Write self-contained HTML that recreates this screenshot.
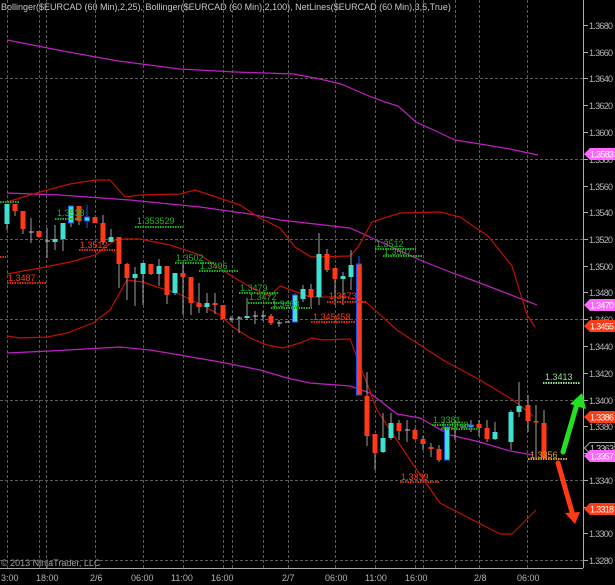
<!DOCTYPE html>
<html><head><meta charset="utf-8"><style>
html,body{margin:0;padding:0;background:#000;width:615px;height:585px;overflow:hidden}
svg{display:block}
text{font-family:"Liberation Sans",sans-serif}
</style></head><body>
<svg width="615" height="585" viewBox="0 0 615 585" xmlns="http://www.w3.org/2000/svg">
<rect width="615" height="585" fill="#000"/>
<g stroke="#5a5a5a" stroke-width="1" stroke-dasharray="3,2">
<line x1="7.5" y1="0" x2="7.5" y2="568"/><line x1="39.5" y1="0" x2="39.5" y2="568"/><line x1="46.5" y1="0" x2="46.5" y2="568"/>
<line x1="95.5" y1="0" x2="95.5" y2="568"/><line x1="143.5" y1="0" x2="143.5" y2="568"/><line x1="183.5" y1="0" x2="183.5" y2="568"/>
<line x1="223.5" y1="0" x2="223.5" y2="568"/><line x1="232.5" y1="0" x2="232.5" y2="568"/><line x1="263.5" y1="0" x2="263.5" y2="568"/>
<line x1="288.5" y1="0" x2="288.5" y2="568"/><line x1="335.5" y1="0" x2="335.5" y2="568"/><line x1="375.5" y1="0" x2="375.5" y2="568"/>
<line x1="415.5" y1="0" x2="415.5" y2="568"/><line x1="423.5" y1="0" x2="423.5" y2="568"/><line x1="455.5" y1="0" x2="455.5" y2="568"/>
<line x1="479.5" y1="0" x2="479.5" y2="568"/><line x1="527.5" y1="0" x2="527.5" y2="568"/>
<line x1="0" y1="78.5" x2="583" y2="78.5"/><line x1="0" y1="159.5" x2="583" y2="159.5"/><line x1="0" y1="239.5" x2="583" y2="239.5"/>
<line x1="0" y1="319.5" x2="583" y2="319.5"/><line x1="0" y1="400.5" x2="583" y2="400.5"/><line x1="0" y1="480.5" x2="583" y2="480.5"/>
<line x1="0" y1="560.5" x2="583" y2="560.5"/>
</g>
<line x1="583.5" y1="0" x2="583.5" y2="568" stroke="#aaa"/>
<line x1="0" y1="568.5" x2="583" y2="568.5" stroke="#aaa"/>
<g stroke="#aaa">
<line x1="583" y1="25.5" x2="588" y2="25.5"/><line x1="583" y1="52.5" x2="588" y2="52.5"/><line x1="583" y1="78.5" x2="588" y2="78.5"/>
<line x1="583" y1="105.5" x2="588" y2="105.5"/><line x1="583" y1="132.5" x2="588" y2="132.5"/><line x1="583" y1="159.5" x2="588" y2="159.5"/>
<line x1="583" y1="186.5" x2="588" y2="186.5"/><line x1="583" y1="212.5" x2="588" y2="212.5"/><line x1="583" y1="239.5" x2="588" y2="239.5"/>
<line x1="583" y1="266.5" x2="588" y2="266.5"/><line x1="583" y1="292.5" x2="588" y2="292.5"/><line x1="583" y1="319.5" x2="588" y2="319.5"/>
<line x1="583" y1="346.5" x2="588" y2="346.5"/><line x1="583" y1="373.5" x2="588" y2="373.5"/><line x1="583" y1="400.5" x2="588" y2="400.5"/>
<line x1="583" y1="426.5" x2="588" y2="426.5"/><line x1="583" y1="453.5" x2="588" y2="453.5"/><line x1="583" y1="480.5" x2="588" y2="480.5"/>
<line x1="583" y1="507.5" x2="588" y2="507.5"/><line x1="583" y1="533.5" x2="588" y2="533.5"/><line x1="583" y1="560.5" x2="588" y2="560.5"/>
</g>
<g fill="#b4b4b4" font-size="9">
<text x="589" y="29" textLength="24">1.3680</text><text x="589" y="56" textLength="24">1.3660</text><text x="589" y="82" textLength="24">1.3640</text>
<text x="589" y="109" textLength="24">1.3620</text><text x="589" y="136" textLength="24">1.3600</text><text x="589" y="163" textLength="24">1.3580</text>
<text x="589" y="190" textLength="24">1.3560</text><text x="589" y="216" textLength="24">1.3540</text><text x="589" y="243" textLength="24">1.3520</text>
<text x="589" y="270" textLength="24">1.3500</text><text x="589" y="296" textLength="24">1.3480</text><text x="589" y="323" textLength="24">1.3460</text>
<text x="589" y="350" textLength="24">1.3440</text><text x="589" y="377" textLength="24">1.3420</text><text x="589" y="404" textLength="24">1.3400</text>
<text x="589" y="430" textLength="24">1.3380</text><text x="589" y="457" textLength="24">1.3360</text><text x="589" y="484" textLength="24">1.3340</text>
<text x="589" y="511" textLength="24">1.3320</text><text x="589" y="537" textLength="24">1.3300</text><text x="589" y="564" textLength="24">1.3280</text>
</g>
<g fill="#b4b4b4" font-size="9">
<text x="1" y="581">3:00</text><text x="36" y="581">18:00</text><text x="90" y="581">2/6</text>
<text x="131" y="581">06:00</text><text x="171" y="581">11:00</text><text x="211" y="581">16:00</text>
<text x="282" y="581">2/7</text><text x="325" y="581">06:00</text><text x="365" y="581">11:00</text>
<text x="405" y="581">16:00</text><text x="474" y="581">2/8</text><text x="517" y="581">06:00</text>
</g>
<text x="1" y="10" fill="#c8c8c8" font-size="9">Bollinger($EURCAD (60 Min),2,25), Bollinger($EURCAD (60 Min),2,100), NetLines($EURCAD (60 Min),3,5,True)</text>
<text x="1" y="566" fill="#a0a0a0" font-size="9">© 2013 NinjaTrader, LLC</text>
<g fill="none" stroke="#c020c0" stroke-width="1.2">
<polyline points="7,40 63,51 118,61 180,69 235,72 294,74 320,79 341,84 355,90 369,96 385,102 398,106 416,122 440,133 455,140 480,144 510,149 538,155"/>
<polyline points="7,193 60,195 130,200 200,207 250,214 280,220 350,228 370,237 420,260 450,272 480,283 537,305"/>
<polyline points="7,353 50,351 120,347 150,350 180,355 220,362 260,370 287,378 310,383 350,386 370,393 397,414 420,418 450,435 480,442 510,451 533,455"/>
</g>
<g fill="none" stroke="#c01000" stroke-width="1.2">
<polyline points="7,202 40,192 70,184 95,180 110,180 125,197 140,195 180,194 195,190 210,195 240,205 260,218 280,228 295,247 311,257 350,256 358,247 372,222 400,213 440,212 460,217 488,236 512,266 527,315 535,327"/>
<polyline points="7,274 40,268 70,262 95,255 115,240 125,239 140,239 170,245 200,255 230,275 250,287 270,296 280,286 310,297 347,297 367,303 397,330 443,360 480,380 513,400 533,416"/>
<polyline points="7,336 20,338 47,337 67,333 93,323 110,310 127,280 143,282 157,287 177,293 200,304 220,315 233,327 250,338 267,345 283,348 300,343 312,338 323,340 350,339 377,410 410,460 440,503 467,517 500,534 512,534 536,510"/>
</g>
<g stroke="#a0a0a0" stroke-width="1">
<line x1="7" y1="204" x2="7" y2="230"/><line x1="15" y1="204" x2="15" y2="216"/><line x1="23" y1="211" x2="23" y2="234"/>
<line x1="31" y1="218" x2="31" y2="243"/><line x1="39" y1="231" x2="39" y2="237"/><line x1="47" y1="228" x2="47" y2="258"/>
<line x1="55" y1="225" x2="55" y2="250"/><line x1="63" y1="223" x2="63" y2="251"/><line x1="71" y1="206" x2="71" y2="227"/>
<line x1="79" y1="206" x2="79" y2="225"/><line x1="87" y1="205" x2="87" y2="228" stroke="#2050ff"/><line x1="95" y1="217" x2="95" y2="223"/>
<line x1="103" y1="215" x2="103" y2="245"/><line x1="111" y1="229" x2="111" y2="242"/><line x1="119" y1="237" x2="119" y2="288"/>
<line x1="127" y1="263" x2="127" y2="300"/><line x1="135" y1="267" x2="135" y2="306"/><line x1="143" y1="263" x2="143" y2="305"/>
<line x1="151" y1="264" x2="151" y2="275"/><line x1="159" y1="259" x2="159" y2="286"/><line x1="167" y1="266" x2="167" y2="304"/>
<line x1="175" y1="273" x2="175" y2="295"/><line x1="183" y1="263" x2="183" y2="315"/><line x1="191" y1="277" x2="191" y2="315"/>
<line x1="199" y1="283" x2="199" y2="313"/><line x1="207" y1="293" x2="207" y2="313"/><line x1="215" y1="293" x2="215" y2="314"/>
<line x1="223" y1="305" x2="223" y2="319"/><line x1="231" y1="316" x2="231" y2="322"/><line x1="239" y1="316" x2="239" y2="333"/>
<line x1="247" y1="298" x2="247" y2="320"/><line x1="255" y1="311" x2="255" y2="324"/><line x1="263" y1="311" x2="263" y2="321"/>
<line x1="271" y1="314" x2="271" y2="325"/><line x1="279" y1="320" x2="279" y2="327"/><line x1="295" y1="293" x2="295" y2="322" stroke="#2050ff"/>
<line x1="303" y1="285" x2="303" y2="302"/><line x1="311" y1="284" x2="311" y2="307"/><line x1="319" y1="233" x2="319" y2="305"/>
<line x1="327" y1="249" x2="327" y2="272"/><line x1="335" y1="268" x2="335" y2="305"/><line x1="343" y1="272" x2="343" y2="305"/>
<line x1="351" y1="250" x2="351" y2="290"/><line x1="359" y1="256" x2="359" y2="395" stroke="#2050ff"/>
<line x1="367" y1="372" x2="367" y2="446"/><line x1="375" y1="434" x2="375" y2="470"/><line x1="383" y1="413" x2="383" y2="453"/>
<line x1="391" y1="413" x2="391" y2="440"/><line x1="399" y1="420" x2="399" y2="440"/><line x1="407" y1="420" x2="407" y2="442"/>
<line x1="415" y1="428" x2="415" y2="440"/><line x1="423" y1="436" x2="423" y2="450"/><line x1="431" y1="443" x2="431" y2="457"/>
<line x1="439" y1="445" x2="439" y2="462"/><line x1="447" y1="427" x2="447" y2="460" stroke="#2050ff"/><line x1="455" y1="420" x2="455" y2="440"/>
<line x1="471" y1="420" x2="471" y2="432"/><line x1="479" y1="420" x2="479" y2="436"/><line x1="487" y1="420" x2="487" y2="442"/>
<line x1="495" y1="422" x2="495" y2="440"/><line x1="511" y1="410" x2="511" y2="450"/><line x1="519" y1="382" x2="519" y2="417"/>
<line x1="528" y1="395" x2="528" y2="432"/><line x1="536" y1="405" x2="536" y2="458"/><line x1="544" y1="410" x2="544" y2="460"/>
</g>
<g fill="#40e0d0">
<rect x="4.5" y="204" width="5" height="20"/><rect x="52.5" y="239" width="5" height="3"/><rect x="60.5" y="223" width="5" height="16"/>
<rect x="68.5" y="206" width="5" height="17" stroke="#2050ff"/><rect x="84.5" y="217" width="5" height="4" stroke="#2050ff"/>
<rect x="108.5" y="237" width="5" height="5"/><rect x="132.5" y="274" width="5" height="4"/><rect x="140.5" y="263" width="5" height="11"/>
<rect x="156.5" y="266" width="5" height="8"/><rect x="172.5" y="273" width="5" height="20"/><rect x="204.5" y="303" width="5" height="4"/>
<rect x="244.5" y="316" width="5" height="2"/><rect x="292.5" y="295" width="5" height="27" stroke="#2050ff"/>
<rect x="300.5" y="289" width="5" height="10"/><rect x="316.5" y="254" width="5" height="43"/><rect x="340.5" y="276" width="5" height="3"/>
<rect x="348.5" y="265" width="5" height="12"/><rect x="380.5" y="438" width="5" height="14"/><rect x="388.5" y="423" width="5" height="15"/>
<rect x="444.5" y="427" width="5" height="33" stroke="#2050ff"/><rect x="468.5" y="425" width="5" height="2" stroke="#2050ff"/>
<rect x="492.5" y="432" width="5" height="7"/><rect x="508.5" y="412" width="5" height="30"/><rect x="516.5" y="406" width="5" height="6"/>
</g>
<g fill="#ff3a14">
<rect x="12.5" y="204" width="5" height="7"/><rect x="20.5" y="211" width="5" height="18"/><rect x="36.5" y="231" width="5" height="6"/>
<rect x="76.5" y="206" width="5" height="15"/><rect x="92.5" y="217" width="5" height="6"/><rect x="100.5" y="223" width="5" height="19"/>
<rect x="116.5" y="237" width="5" height="27"/><rect x="124.5" y="264" width="5" height="14"/><rect x="148.5" y="264" width="5" height="10"/>
<rect x="164.5" y="266" width="5" height="29"/><rect x="180.5" y="273" width="5" height="4"/><rect x="188.5" y="277" width="5" height="26"/>
<rect x="196.5" y="303" width="5" height="4"/><rect x="212.5" y="303" width="5" height="2"/><rect x="220.5" y="305" width="5" height="14"/>
<rect x="268.5" y="316" width="5" height="7"/><rect x="308.5" y="289" width="5" height="8"/><rect x="324.5" y="254" width="5" height="16"/>
<rect x="332.5" y="268" width="5" height="11"/><rect x="356.5" y="264" width="5" height="131" stroke="#2050ff"/>
<rect x="364.5" y="396" width="5" height="40"/><rect x="372.5" y="434" width="5" height="19"/><rect x="396.5" y="423" width="5" height="8"/>
<rect x="412.5" y="430" width="5" height="9"/><rect x="420.5" y="439" width="5" height="5"/><rect x="428.5" y="447" width="5" height="2"/>
<rect x="436.5" y="449" width="5" height="11"/><rect x="452.5" y="428" width="5" height="1"/><rect x="476.5" y="424" width="5" height="4"/>
<rect x="484.5" y="428" width="5" height="11"/><rect x="525.5" y="405" width="5" height="16"/><rect x="533.5" y="421" width="5" height="1.5"/>
<rect x="541.5" y="423" width="5" height="35"/>
</g>
<g stroke="#c8c8c8"><line x1="29" y1="232" x2="34" y2="232"/><line x1="45" y1="241" x2="50" y2="241"/><line x1="229" y1="319" x2="234" y2="319"/>
<line x1="237" y1="318" x2="242" y2="318"/><line x1="253" y1="316" x2="258" y2="316"/><line x1="261" y1="316" x2="266" y2="316"/>
<line x1="277" y1="323" x2="282" y2="323"/><line x1="285" y1="322" x2="290" y2="322"/><line x1="405" y1="430" x2="410" y2="430"/>
<line x1="461" y1="427" x2="466" y2="427"/></g>
<g font-size="9">
<g fill="#22b022"><text x="57" y="216">1.3538</text><text x="137" y="224">1.353529</text><text x="176" y="261">1.3502</text>
<text x="200" y="269">1.3496</text><text x="240" y="291">1.3479</text><text x="249" y="300">1.3472</text><text x="272" y="307">1.3463</text>
<text x="376" y="247">1.3512</text><text x="384" y="255">1.3507</text><text x="433" y="423">1.3381</text><text x="441" y="428">1.3378</text></g>
<g fill="#ff3a14"><text x="80" y="248">1.3512</text><text x="8" y="281">1.3487</text><text x="329" y="299">1.3473</text>
<text x="313" y="320">1.345458</text><text x="401" y="480">1.3339</text></g>
<text x="530" y="458" fill="#e0a020">1.3356</text>
<text x="545" y="380" fill="#90e090">1.3413</text>
</g>
<g stroke-dasharray="1.5,1" stroke-width="2">
<g stroke="#22b022"><line x1="0" y1="202" x2="20" y2="202"/><line x1="55" y1="219" x2="82" y2="219"/><line x1="135" y1="227" x2="183" y2="227"/>
<line x1="175" y1="263" x2="215" y2="263"/><line x1="199" y1="271" x2="239" y2="271"/><line x1="239" y1="293" x2="278" y2="293"/>
<line x1="248" y1="303" x2="290" y2="303"/><line x1="271" y1="308" x2="312" y2="308"/><line x1="375" y1="249" x2="416" y2="249"/>
<line x1="383" y1="256" x2="423" y2="256"/><line x1="432" y1="425" x2="470" y2="425"/><line x1="441" y1="429" x2="480" y2="429"/></g>
<g stroke="#e02a10"><line x1="79" y1="250" x2="115" y2="250"/><line x1="7" y1="283" x2="46" y2="283"/><line x1="0" y1="257" x2="6" y2="257"/>
<line x1="327" y1="302" x2="367" y2="302"/><line x1="311" y1="322" x2="356" y2="322"/><line x1="400" y1="482" x2="440" y2="482"/></g>
<line x1="528" y1="459" x2="568" y2="459" stroke="#e0a020"/>
<line x1="543" y1="383" x2="580" y2="383" stroke="#90e090"/>
</g>
<g stroke-linecap="round">
<line x1="563" y1="452" x2="577" y2="404" stroke="#22e022" stroke-width="5"/>
<polygon points="570,404 582,393 586,409" fill="#22e022"/>
<line x1="558" y1="463" x2="572" y2="512" stroke="#ff3a14" stroke-width="5"/>
<polygon points="565,513 580,512 575,524" fill="#ff3a14"/>
</g>
<g font-size="9">
<polygon points="584,154 590,148 615,148 615,160 590,160" fill="#ff66ff"/><text x="590" y="157.5" fill="#fff" textLength="24">1.3583</text>
<polygon points="584,305 590,299 615,299 615,311 590,311" fill="#ff66ff"/><text x="590" y="308.5" fill="#fff" textLength="24">1.3470</text>
<polygon points="584,326 590,320 615,320 615,332 590,332" fill="#ff3a14"/><text x="590" y="329.5" fill="#fff" textLength="24">1.3455</text>
<polygon points="584,417 590,411 615,411 615,423 590,423" fill="#ff3a14"/><text x="590" y="420.5" fill="#fff" textLength="24">1.3386</text>
<polygon points="584.5,448 590,442.5 615,442.5 615,453.5 590,453.5" fill="#000" stroke="#aaa"/><text x="590" y="451.5" fill="#ccc" textLength="24">1.3363</text>
<polygon points="584,456 590,450 615,450 615,462 590,462" fill="#ff66ff"/><text x="590" y="459.5" fill="#fff" textLength="24">1.3357</text>
<polygon points="584,509 590,503 615,503 615,515 590,515" fill="#ff3a14"/><text x="590" y="512.5" fill="#fff" textLength="24">1.3318</text>
</g>
</svg>
</body></html>
